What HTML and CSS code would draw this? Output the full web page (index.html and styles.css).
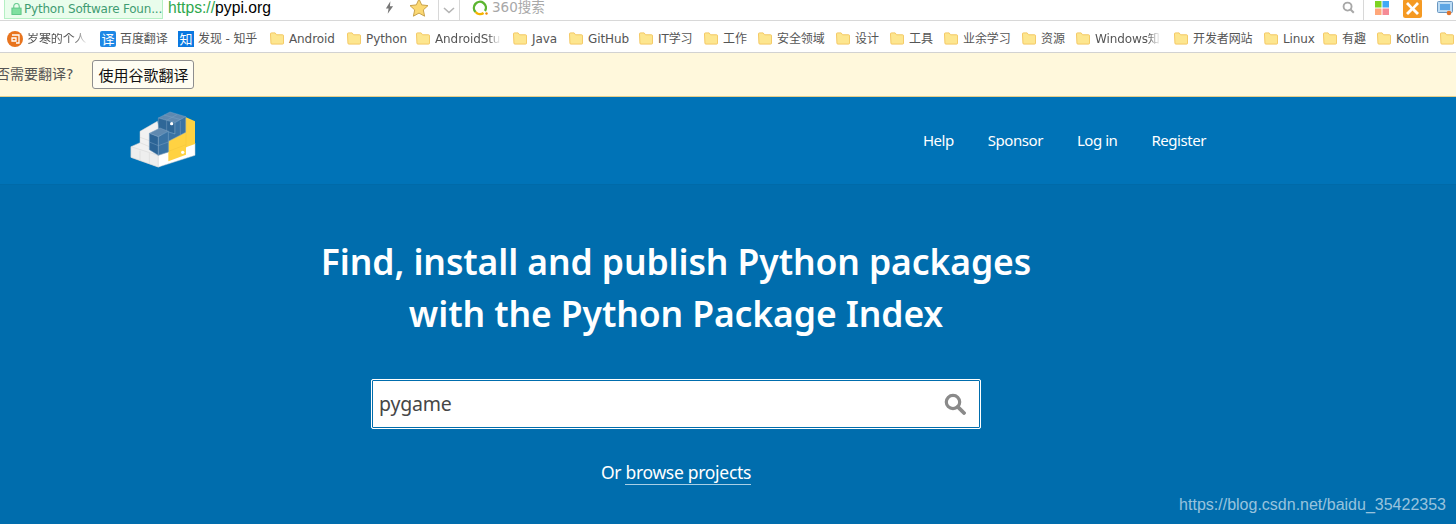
FILE: index.html
```html
<!DOCTYPE html>
<html lang="zh-CN">
<head>
<meta charset="utf-8">
<title>PyPI</title>
<link rel="stylesheet" href="styles.css">
</head>
<body>
<svg class="defs" width="0" height="0">
  <defs>
    <symbol id="folder" viewBox="0 0 15 13">
      <path d="M.5 1.5a1 1 0 0 1 1-1h4l1.5 2h6.500a1 1 0 0 1 1 1v8a1 1 0 0 1-1 1h-11.500a1 1 0 0 1-1-1z" fill="#fde68f" stroke="#f3c65f"/>
    </symbol>
  </defs>
</svg>
<div class="addressbar">
  <div class="badge">
    <svg class="lock" viewBox="0 0 12 13"><path d="M3 6V3.500a3 3 0 0 1 6 0V6" fill="none" stroke="#6fcf97" stroke-width="1.300"/><rect x="1" y="5.500" width="10" height="7" fill="#7fe0a0" stroke="#5cc585"/></svg>
    <span>Python Software Foun...</span>
  </div>
  <div class="url"><span class="scheme">https://</span>pypi.org</div>
  <svg class="bolt" viewBox="0 0 10 14"><path d="M6 0 1 8h3l-1 6 6-8.500H5.500z" fill="#777"/></svg>
  <svg class="star" viewBox="0 0 20 20"><path d="m10 1 2.700 5.900 6.300.7-4.700 4.300 1.300 6.300L10 15.100 4.400 18.200l1.300-6.300L1 7.600l6.300-.7z" fill="#fbd872" stroke="#c9a24a"/></svg>
  <div class="dropdown"><svg viewBox="0 0 12 7"><path d="m1 1 5 4.500L11 1" fill="none" stroke="#b4b4b4" stroke-width="1.600"/></svg></div>
  <div class="searchbox">
    <svg class="ring" viewBox="0 0 16 16"><path d="M3.600 12A6 6 0 1 1 13 11" fill="none" stroke="#5cb531" stroke-width="2.400"/><path d="M3.600 12a6 6 0 0 0 8 1" fill="none" stroke="#f5b400" stroke-width="2.400"/><circle cx="14.500" cy="13.500" r="1.200" fill="#f08a00"/></svg>
    <span class="placeholder">360搜索</span>
    <svg class="minisearch" viewBox="0 0 14 14"><circle cx="6" cy="6" r="4.300" fill="none" stroke="#a8a8a8" stroke-width="2"/><path d="m9.200 9.200 3.500 3.500" stroke="#a8a8a8" stroke-width="2.200"/></svg>
  </div>
  <div class="tools">
    <svg class="tiles" viewBox="0 0 14 14"><rect width="6.500" height="6.500" fill="#7ed321"/><rect x="7.500" width="6.500" height="6.500" fill="#3fa9f5"/><rect y="7.500" width="6.500" height="6.500" fill="#ffa77a"/><rect x="7.500" y="7.500" width="6.500" height="6.500" fill="#f58a95"/></svg>
    <svg class="xicon" viewBox="0 0 19 19"><rect width="19" height="19" rx="2.500" fill="#f59a23"/><path d="m5 3 4.500 5L14 3l2 2-4.500 4.500L16 14l-2 2-4.500-4.500L5 16l-2-2 4.500-4.500L3 5z" fill="#fff"/></svg>
    <svg class="screen" viewBox="0 0 16 16"><rect x=".5" y="1.500" width="15" height="11" rx="1" fill="#bcdcf5" stroke="#6a97c0"/><path d="M3 4h10v6H3z" fill="#5ea6e4"/><circle cx="12" cy="13" r="2.300" fill="#e2732a"/></svg>
  </div>
</div>
<nav class="bookmarks">
  <a class="bm w93"><svg class="site" viewBox="0 0 16 16"><circle cx="8" cy="8" r="8" fill="#e8741e"/><path d="M5 4h7v8H9M5 7h4v3H5z" fill="none" stroke="#fff" stroke-width="1.300"/></svg><span class="fade label-60">岁寒的个人</span></a>
  <a class="bm w78"><span class="tile blue-a">译</span><span>百度翻译</span></a>
  <a class="bm w92"><span class="tile blue-b">知</span><span>发现 - 知乎</span></a>
  <a class="bm w77"><svg class="fold"><use href="#folder"/></svg><span>Android</span></a>
  <a class="bm w69"><svg class="fold"><use href="#folder"/></svg><span>Python</span></a>
  <a class="bm w97"><svg class="fold"><use href="#folder"/></svg><span class="fade label-66">AndroidStu</span></a>
  <a class="bm w56"><svg class="fold"><use href="#folder"/></svg><span>Java</span></a>
  <a class="bm w70"><svg class="fold"><use href="#folder"/></svg><span>GitHub</span></a>
  <a class="bm w65"><svg class="fold"><use href="#folder"/></svg><span>IT学习</span></a>
  <a class="bm w54"><svg class="fold"><use href="#folder"/></svg><span>工作</span></a>
  <a class="bm w78"><svg class="fold"><use href="#folder"/></svg><span>安全领域</span></a>
  <a class="bm w54"><svg class="fold"><use href="#folder"/></svg><span>设计</span></a>
  <a class="bm w54"><svg class="fold"><use href="#folder"/></svg><span>工具</span></a>
  <a class="bm w78"><svg class="fold"><use href="#folder"/></svg><span>业余学习</span></a>
  <a class="bm w54"><svg class="fold"><use href="#folder"/></svg><span>资源</span></a>
  <a class="bm w98"><svg class="fold"><use href="#folder"/></svg><span class="fade label-66">Windows知</span></a>
  <a class="bm w90"><svg class="fold"><use href="#folder"/></svg><span>开发者网站</span></a>
  <a class="bm w59"><svg class="fold"><use href="#folder"/></svg><span>Linux</span></a>
  <a class="bm w54"><svg class="fold"><use href="#folder"/></svg><span>有趣</span></a>
  <a class="bm w63"><svg class="fold"><use href="#folder"/></svg><span>Kotlin</span></a>
  <a class="bm w16"><svg class="fold"><use href="#folder"/></svg></a>
</nav>
<div class="translatebar">
  <span class="question">是否需要翻译?</span>
  <button class="translate">使用谷歌翻译</button>
</div>
<header class="siteheader">
  <svg class="logo" viewBox="0 0 270 240" aria-label="PyPI">
    <g stroke="#d2d2d2" stroke-width="1.500">
      <path d="M33 146 60 134V100L112 70 145 190 115 207 33 178z" fill="#f1f1f1"/>
      <path d="M33 146 115 172V207L33 178z" fill="#eeeeee"/>
      <path d="M60 158V189M88 165V198M60 134 88 146M60 118 88 128" fill="none"/>
      <path d="M115 172 225 135V172L115 207z" fill="#fff"/>
    </g>
    <path d="M145 130 198 58 225 70V138L198 148V170L145 190z" fill="#ffd242"/>
    <path d="M198 105V148M145 160 198 140" stroke="#f3c53a" stroke-width="1.500" fill="none"/>
    <circle cx="188" cy="163" r="5" fill="#fff"/>
    <g stroke="#7ba0c2" stroke-width="1.500">
      <path d="M115 60 150 42 197 56 165 74z" fill="#5f89b0"/>
      <path d="M115 60 165 74V108L115 92z" fill="#2f6797"/>
      <path d="M165 74 197 56V103L145 130V102L165 108z" fill="#3a73a4"/>
      <path d="M132 51 182 65M172 49 140 67M140 67V100M181 69V112" fill="none"/>
      <path d="M88 106 120 90 145 100 115 116z" fill="#5f89b0"/>
      <path d="M88 106 115 116V172L88 155z" fill="#2c6496"/>
      <path d="M115 116 145 100V162L115 172z" fill="#3a73a4"/>
      <path d="M88 132 115 143 145 132" fill="none"/>
    </g>
    <circle cx="155" cy="77" r="5" fill="#fff"/>
  </svg>
  <nav class="sitenav">
    <a>Help</a><a>Sponsor</a><a>Log in</a><a>Register</a>
  </nav>
</header>
<main class="hero">
  <h1 class="headline">Find, install and publish Python packages<br>with the Python Package Index</h1>
  <form class="searchform">
    <span class="query">pygame</span>
    <svg class="searchicon" viewBox="0 0 22 22"><circle cx="9" cy="9" r="6.700" fill="none" stroke="#8a8a8a" stroke-width="3.200"/><path d="m13.800 13.800 6.200 6.200" stroke="#8a8a8a" stroke-width="3.800" stroke-linecap="round"/></svg>
  </form>
  <p class="browse">Or <a>browse projects</a></p>
</main>
<div class="watermark">https://blog.csdn.net/baidu_35422353</div>
</body>
</html>
```
FILE: styles.css
```css
* { box-sizing: border-box; }
html, body { margin: 0; height: 524px; overflow: hidden; }
body { position: relative; width: 1456px; background: #006dad; font-family: "Noto Sans", "Noto Sans CJK SC", sans-serif; }
.defs { position: absolute; }

.addressbar { display: flex; align-items: center; height: 21px; background: #fff; border-bottom: 1px solid #d8d8d8; padding-left: 4px; }
.badge { display: flex; align-items: center; gap: 2px; width: 159px; height: 19px; margin-top: -2px; padding-left: 6px; background: #e9fdec; border: 1px solid #b5f0c4; border-top: 0; color: #3f9c72; font: 12px/1 "DejaVu Sans", sans-serif; letter-spacing: -.2px; white-space: nowrap; overflow: hidden; }
.lock { width: 11px; height: 12px; flex: none; }
.url { width: 222px; padding-left: 5px; font: 15.700px/1 "Liberation Sans", sans-serif; color: #000; margin-top: -4px; }
.scheme { color: #2fa84f; }
.bolt { width: 9px; height: 13px; margin-top: -5px; flex: none; }
.star { width: 20px; height: 20px; margin-left: 15px; margin-top: -4px; flex: none; }
.dropdown { display: flex; align-items: center; justify-content: center; width: 22px; height: 20px; margin-left: 9px; border-left: 1px solid #d8d8d8; border-right: 1px solid #d8d8d8; }
.dropdown svg { width: 12px; height: 7px; }
.searchbox { display: flex; align-items: center; width: 904px; height: 20px; padding: 0 8px 5px 12px; border-right: 1px solid #d8d8d8; }
.ring { width: 16px; height: 16px; flex: none; }
.placeholder { flex: 1; margin-left: 4px; font: 13.500px/1 "DejaVu Sans", "Noto Sans CJK SC", sans-serif; color: #a8a8a8; }
.minisearch { width: 13px; height: 13px; flex: none; }
.tools { display: flex; align-items: center; height: 20px; padding: 0 0 4px 11px; gap: 14px; }
.tiles { width: 14px; height: 14px; flex: none; }
.xicon { width: 19px; height: 19px; flex: none; }
.screen { width: 16px; height: 16px; flex: none; margin-left: 1px; }

.bookmarks { display: flex; align-items: center; height: 32px; padding: 4px 0 0 7px; background: #fff; border-bottom: 1px solid #d2d2d2; overflow: hidden; }
.bm { display: flex; align-items: center; gap: 5px; flex: none; font: 12px/1 "DejaVu Sans", "Noto Sans CJK SC", sans-serif; letter-spacing: -.1px; color: #555; white-space: nowrap; }
.w16 { width: 16px; } .w54 { width: 54px; } .w56 { width: 56px; } .w59 { width: 59px; } .w63 { width: 63px; } .w65 { width: 65px; }
.w69 { width: 69px; } .w70 { width: 70px; } .w77 { width: 77px; } .w78 { width: 78px; } .w90 { width: 90px; }
.w92 { width: 92px; } .w93 { width: 93px; } .w97 { width: 97px; } .w98 { width: 98px; }
.fold { width: 14px; height: 13px; flex: none; }
.site { width: 16px; height: 16px; flex: none; margin-right: -1px; margin-top: 1px; }
.tile { display: flex; align-items: center; justify-content: center; width: 16px; height: 16px; margin-right: -1px; flex: none; color: #fff; font: 13px/1 "Noto Sans CJK SC", sans-serif; letter-spacing: 0; border-radius: 2px; }
.blue-a { background: #1e88e5; }
.blue-b { background: #0a78e0; border-radius: 0; }
.fade { overflow: hidden; -webkit-mask-image: linear-gradient(90deg, #000 80%, transparent); mask-image: linear-gradient(90deg, #000 80%, transparent); }
.label-60 { width: 60px; }
.label-66 { width: 66px; }

.translatebar { display: flex; align-items: center; height: 44px; padding-bottom: 1px; background: #fff8dc; border-bottom: 1px solid #e6cf8a; overflow: hidden; }
.question { flex: none; margin-left: -18px; margin-right: 19px; font: 14px/1 "DejaVu Sans", "Noto Sans CJK SC", sans-serif; color: #555; }
.translate { width: 102px; height: 29px; padding: 0; background: #fffdf2; border: 1px solid #8e8e8e; border-radius: 3px; font: 15px/1 "Noto Sans CJK SC", sans-serif; color: #111; }

.siteheader { display: flex; align-items: center; justify-content: space-between; width: 1206px; height: 87px; padding-left: 120px; position: relative; }
.siteheader::after { content: ""; position: absolute; left: 0; top: 0; width: 1456px; height: 87px; background: #0073b7; border-bottom: 1px solid #006aa8; z-index: -1; }
.logo { width: 90px; height: 80px; margin-top: -6px; }
.sitenav { display: flex; gap: 34px; }
.sitenav a { font: 15px/1 "Noto Sans", sans-serif; letter-spacing: -.45px; color: #fff; }

.hero { display: flex; flex-direction: column; align-items: center; width: 1352px; padding-top: 51px; }
.headline { margin: 0; font: 600 35.500px/52px "Noto Sans", sans-serif; letter-spacing: -.1px; color: #fff; text-align: center; }
.searchform { display: flex; align-items: center; justify-content: space-between; width: 610px; height: 50px; margin-top: 40px; padding: 0 14px 0 7px; background: #fff; border: 1px solid #fff; box-shadow: inset 0 0 0 1px #006dad; border-radius: 2px; }
.query { font: 19.500px/1 "Noto Sans", sans-serif; letter-spacing: -.2px; color: #464646; }
.searchicon { width: 22px; height: 22px; }
.browse { margin: 35px 0 0; font: 17.500px/1 "Noto Sans", sans-serif; letter-spacing: -.3px; color: #fff; }
.browse a { border-bottom: 1px solid #a8cfe6; }

.watermark { position: absolute; right: 10px; top: 497px; font: 16px/1 "Liberation Sans", sans-serif; color: rgba(255,255,255,.6); }
```
